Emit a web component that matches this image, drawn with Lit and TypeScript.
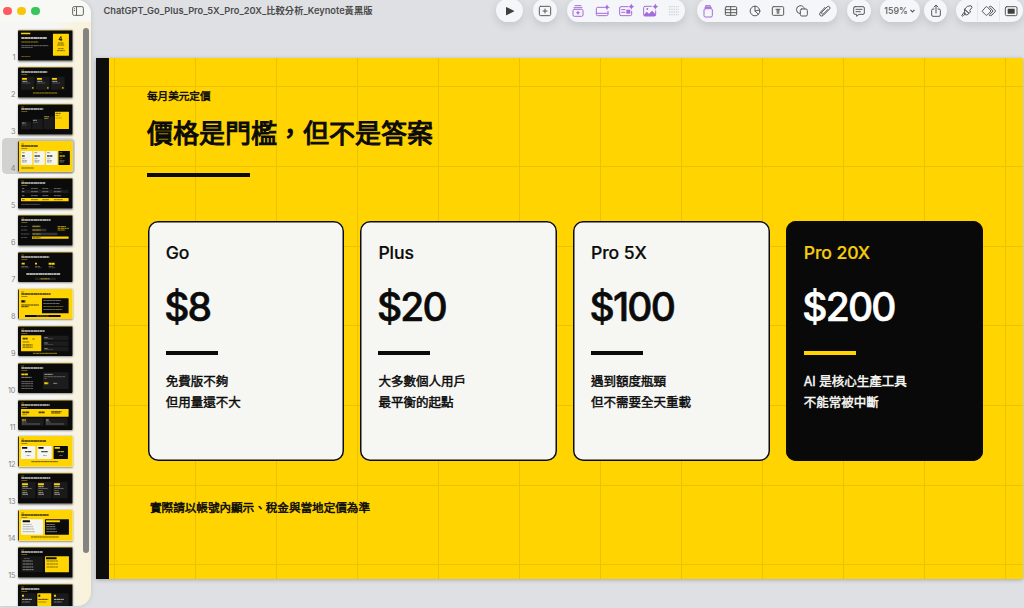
import { LitElement, html, css, svg, SVGTemplateResult } from "lit";
import { customElement, property } from "lit/decorators.js";

const Y = "#ffd400";
const K = "#0b0b0b";
const W = "#f5f5f0";

const box = (x: number, y: number, w: number, h: number, f: string, r = 1) =>
  svg`<rect x=${x} y=${y} width=${w} height=${h} rx=${r} fill=${f}></rect>`;
const line = (x: number, y: number, w: number, c: string, h = 2.4, o = 0.75) =>
  svg`<path d=${`M${x} ${y}h${w}`} stroke=${c} stroke-width=${h} stroke-dasharray="8 .8 11 .6 6 .9" opacity=${o}></path>`;
const head = (c: string, w: number) =>
  svg`${line(10, 9, 9, c === W ? Y : K, 1.6)}${line(10, 15, w, c, 4, 0.8)}${box(10, 21, 18, 1.2, c === W ? Y : K, 0)}`;

interface Thumb { yellow?: boolean; art: SVGTemplateResult; }

const thumbs: Thumb[] = [
  { art: svg`${box(9, 8, 28, 5, Y)}${line(10, 24, 77, W, 5, 0.95)}${line(10, 36, 51, Y, 2.4)}${line(10, 47, 82, W, 2, 0.6)}${line(10, 52, 34, W, 2, 0.6)}${line(10, 80, 28, Y, 1.8)}
      ${box(105, 11, 48, 66, Y)}<path d="M129 19l-6 10h10M129.500 20v13" stroke=${K} stroke-width="2.600" fill="none"></path>${line(120, 39, 17, K, 2.4)}${line(118, 45, 21, K, 2.4)}${line(120, 56, 17, K, 2)}${line(117, 62, 24, K, 2)}` },
  { art: svg`${head(W, 78)}${[0, 1, 2].map((i) => svg`${box(9 + i * 45, 29, 41, 39, "#1b1b1b")}${box(12 + i * 45, 33, 15, 5, Y)}${line(13 + i * 45, 43, 15, W, 2.6)}${line(13 + i * 45, 48, 24, W, 1.6, 0.5)}${box(42 + i * 45, 61, 5, 3.4, Y)}`)}${line(45, 78, 73, Y, 2.6)}` },
  { art: svg`${head(W, 66)}${box(9, 53, 31, 23, "#1b1b1b")}${box(43, 45, 31, 31, "#1b1b1b")}${box(77, 37, 31, 39, "#1b1b1b")}${line(12, 57, 11, W, 2.4)}${line(45, 49, 12, W, 2.4)}${line(79, 38, 14, Y, 2.6)}${line(79, 43, 12, W, 2)}${line(12, 63, 14, W, 1.5, 0.4)}${line(45, 55, 14, W, 1.5, 0.4)}
      ${box(111, 23, 42, 52, Y)}${line(113, 28, 15, K, 2.6)}${line(113, 34, 12, K, 1.8)}${line(113, 42, 18, K, 1.6, 0.5)}` },
  { yellow: true, art: svg`${head(K, 50)}${[0, 1, 2, 3].map((i) => svg`${box(9 + i * 37.6, 30, 34, 42, i === 3 ? K : W, 1.5)}${line(12 + i * 37.6, 35, 9, i === 3 ? Y : K, 2, 0.6)}${line(12 + i * 37.6, 45, i ? 16 : 9, i === 3 ? Y : K, 5, 0.8)}${line(12 + i * 37.6, 53, 10, i === 3 ? Y : K, 1.2, 0.7)}${line(12 + i * 37.6, 59, 15, i === 3 ? W : K, 1.8, 0.6)}${line(12 + i * 37.6, 63, 13, i === 3 ? W : K, 1.8, 0.6)}`)}${line(10, 81, 38, K, 2.2)}` },
  { art: svg`${head(W, 72)}${[31, 41, 53].map((y, r) => svg`${r === 1 ? box(9, 35, 143, 10, "#1c1c1c") : ""}${line(12, y, 7, W, 2, 0.7)}${line(39, y, 21, W, 2, 0.6)}${line(73, y, 18, W, 2, 0.6)}${line(108, y, 22, W, 2, 0.6)}`)}${box(9, 60, 143, 10, Y)}${line(12, 65, 8, K, 2.2)}${line(39, 65, 22, K, 2)}${line(73, 65, 20, K, 2)}${line(108, 65, 26, K, 2)}${line(10, 79, 57, W, 1.8, 0.5)}` },
  { art: svg`${head(W, 88)}${[34, 45, 57, 68].map((y, r) => svg`${line(9, y, r === 2 ? 25 : 19, W, 1.8, 0.5)}${box(42, y - 3.5, [24, 43, 76, 110][r], 7, r === 3 ? Y : "#343434")}${line(44, y, 24, r === 3 ? K : Y, 2.2)}`)}${line(119, 35, 25, Y, 3)}${line(119, 40, 34, Y, 2.6)}${line(119, 45, 23, Y, 2.6)}` },
  { art: svg`${head(W, 84)}${line(11, 35, 10, Y, 5, 1)}${line(51, 35, 6, Y, 5, 1)}${line(92, 35, 18, Y, 6, 1)}${line(10, 43, 20, W, 2, 0.6)}${line(51, 43, 15, W, 2, 0.6)}${line(92, 43, 14, W, 2, 0.6)}${line(10, 47, 24, W, 1.5, 0.4)}${line(51, 47, 20, W, 1.5, 0.4)}${line(92, 47, 20, W, 1.5, 0.4)}${line(25, 66, 102, W, 3.8, 0.9)}${box(51, 77, 63, 7, "#242424")}${line(68, 80.5, 28, Y, 2.4)}` },
  { yellow: true, art: svg`${head(K, 88)}${line(10, 37, 12, K, 7, 1)}${line(10, 48, 53, K, 3)}${line(10, 53, 22, K, 3)}${box(72, 28, 80, 45, K)}${[34, 43, 52, 61].map((y, i) => line(76, y, [53, 49, 60, 57][i], i === 2 ? Y : W, 2, 0.7))}${box(21, 78, 107, 6, K)}${line(55, 81, 38, Y, 1.8)}` },
  { art: svg`${head(W, 70)}${box(9, 28, 61, 48, Y)}${line(14, 38, 15, K, 5)}${line(43, 39, 7, K, 2)}${line(14, 48, 20, K, 2)}${[56, 60, 64].map((y) => line(14, y, 30, K, 2))}${[29, 46, 62].map((y) => svg`${box(76, y, 76, 14, "#1c1c1c")}${line(79, y + 5, 11, W, 2)}${line(79, y + 9, 27, W, 1.5, 0.4)}`)}${line(45, 82, 72, Y, 2.5)}` },
  { art: svg`${head(W, 66)}${line(10, 34, 20, Y, 5, 1)}${line(10, 43, 31, W, 2.2)}${[56, 62, 69, 77].map((y) => line(10, y, 36, W, 2, 0.6))}${box(75, 28, 77, 50, "#1c1c1c")}${line(79, 34, 25, W, 2.4)}${line(79, 41, 63, W, 1.8, 0.5)}${line(79, 46, 7, W, 1.8, 0.5)}${line(79, 61, 12, Y, 6, 1)}${line(106, 61, 12, W, 2.2)}` },
  { art: svg`${head(W, 85)}${box(9, 27, 143, 23, Y)}${line(13, 37, 21, K, 5)}${line(62, 37, 18, K, 5)}${line(100, 35, 31, K, 3)}${line(100, 39, 28, K, 3)}${line(13, 44, 14, K, 1.6)}${box(9, 55, 68, 22, "#1c1c1c")}${box(81, 55, 68, 22, "#1c1c1c")}${line(12, 60, 12, Y, 4)}${line(84, 60, 9, W, 4, 0.5)}${line(12, 66, 13, W, 2, 0.6)}${line(84, 66, 13, W, 2, 0.6)}${line(12, 72, 55, W, 2, 0.5)}${line(84, 72, 55, W, 2, 0.5)}` },
  { yellow: true, art: svg`${head(K, 75)}${[0, 1, 2].map((i) => svg`${box(9 + i * 49, 30, 43, 39, i === 2 ? K : W, 1.5)}${box(12 + i * 49, 33, 16, 5, i === 2 ? Y : K)}${line(21 + i * 49, 47, 19, i === 2 ? Y : K, 3.4)}${line(26 + i * 49, 58, 11, i === 2 ? W : K, 2, 0.6)}`)}${line(40, 77, 80, K, 2.4)}` },
  { art: svg`${head(W, 87)}${[0, 1, 2].map((i) => svg`${box(9 + i * 48, 27, 44, 49, "#1a1a1a")}${box(12 + i * 48, 31, 18, 6, Y)}${line(13 + i * 48, 41, 16, W, 3)}${line(13 + i * 48, 46, 29, W, 2, 0.6)}${line(13 + i * 48, 53, 13, Y, 1.8)}${line(13 + i * 48, 59, 15, W, 2.4)}${line(13 + i * 48, 64, 17, W, 2.4)}`)}` },
  { yellow: true, art: svg`${head(K, 83)}${box(9, 28, 66, 46, W)}${box(81, 28, 72, 46, K)}${box(14, 31, 22, 6, K)}${box(84, 31, 42, 6, Y)}${[43, 50, 57, 65].map((y, i) => svg`${line(14, y, 28 + i * 3, K, 1.8, 0.5)}${line(85, y, 26 + i * 2, W, 2)}`)}${line(39, 81, 84, K, 2.4)}` },
  { art: svg`${head(W, 65)}${box(9, 28, 66, 48, "#171717")}${box(81, 28, 72, 48, Y)}${box(84, 31, 32, 6, K)}${line(18, 34, 17, W, 1.8, 0.5)}${[42, 51, 60, 68].map((y, i) => svg`${line(14, y, 30 + i, W, 2.2, 0.7)}${i < 3 ? line(86, y, 34, K, 2) : ""}`)}` },
  { art: svg`${head(W, 55)}${box(9, 28, 45, 60, "#1a1a1a")}${box(58, 28, 42, 60, Y)}${box(104, 28, 48, 60, "#1a1a1a")}${[12, 61, 108].map((x, i) => svg`${box(x, 32, 6, 6, i === 1 ? K : Y)}${line(x, 46, 30, i === 1 ? K : W, 3)}${line(x, 54, 24, i === 1 ? K : W, 2, 0.6)}`)}` },
];

const icons: Record<string, SVGTemplateResult> = {
  play: svg`<path d="M18 20v21q0 2.500 2.400 1.300l21-10.500q2.300-1.300 0-2.600l-21-10.500q-2.400-1.200-2.400 1.300z" fill="#3f3f3d" stroke="none"></path>`,
  add: svg`<rect x="13" y="16" width="34" height="28" rx="4"></rect><path d="M30 24v12M24 30h12"></path>`,
  animate: svg`<path d="M21 14h18M18 20h24"></path><rect x="15" y="25" width="30" height="21" rx="4"></rect><path d="M30 28q.8 6.500 7 7.500-6.200 1-7 7.500-.8-6.500-7-7.500 6.200-1 7-7.500z" fill="currentColor" stroke="none"></path>`,
  slidefx: svg`<path d="M37 19H17q-4 0-4 4v17q0 4 4 4h27q4 0 4-4V31M13 37h35"></path><path d="M45 9q1 9 10 10-9 1-10 10-1-9-10-10 9-1 10-10z" fill="currentColor" stroke="none"></path>`,
  textfx: svg`<path d="M36 17H15q-4 0-4 4v19q0 4 4 4h28q4 0 4-4V31M17 26h10M17 34h10"></path><rect x="31" y="26" width="12" height="12" fill="currentColor" stroke="none"></rect><path d="M46 7q1 9 10 10-9 1-10 10-1-9-10-10 9-1 10-10z" fill="currentColor" stroke="none"></path>`,
  imagefx: svg`<path d="M34 16H15q-4 0-4 4v21q0 4 4 4h28q4 0 4-4V30"></path><path d="M11 42l9-10 7 6 9-9 11 11v5H12z" fill="currentColor" stroke="none"></path><circle cx="22" cy="24" r="3" fill="currentColor" stroke="none"></circle><path d="M46 7q1 9 10 10-9 1-10 10-1-9-10-10 9-1 10-10z" fill="currentColor" stroke="none"></path>`,
  dots: svg`<path d="M15 17h30M15 25h30M15 33h30M15 41h30" stroke="#d0d1d3" stroke-width="4" stroke-linecap="butt" stroke-dasharray="4 3"></path>`,
  jar: svg`<rect x="18" y="23" width="25" height="25" rx="4"></rect><path d="M21 20h19M24 14h13v4H24z"></path>`,
  table: svg`<rect x="13" y="17" width="34" height="26" rx="3"></rect><path d="M13 26h34M13 35h34M29 17v26"></path>`,
  chart: svg`<circle cx="30" cy="30" r="14.500"></circle><path d="M30 15.500V30l10 10M30 30l13-3"></path>`,
  text: svg`<rect x="13" y="17" width="34" height="26" rx="3"></rect><path d="M24 25h12M30 25v11M26 30h8M27 36h6"></path>`,
  shapes: svg`<path d="M24 38A12 12 0 1 1 37 23"></path><rect x="25" y="24" width="21" height="21" rx="4"></rect>`,
  clip: svg`<path d="M39 25L26 38q-3 3-5.500.5t.5-5.500l15-15q4-4 7.500-.5t-.5 7.500L26 42q-6 6-10.500 1.500T17 33l13-14"></path>`,
  comment: svg`<path d="M18 17h24q4 0 4 4v15q0 4-4 4H30l-7 6v-6h-5q-4 0-4-4V21q0-4 4-4zM21 25h18M21 32h13"></path>`,
  share: svg`<path d="M24 24h-3q-4 0-4 4v14q0 4 4 4h18q4 0 4-4V28q0-4-4-4h-3M30 36V13M24 18l6-6 6 6"></path>`,
  brush: svg`<path d="M32 16l10-2 3 5-7 10 3 4-5 4-13-12 4-5zM23 25l13 12-6 5-8-2 1-5zM22 33l-8 11q2 3 5 0l7-6"></path>`,
  diamonds: svg`<path d="M10 30l10-12q2-2.500 5 0l11 12-11 12q-3 2.500-5 0zM31 17q4-3.500 8 1l11 12-11 12q-4 4-8 1M33 20l9 10-9 10"></path>`,
  present: svg`<rect x="13" y="17" width="35" height="27" rx="4"></rect><rect x="20" y="23" width="21" height="15" rx="1" fill="#3f3f3d" stroke="none"></rect>`,
};

@customElement("tool-icon")
class ToolIcon extends LitElement {
  @property() name = "";
  static styles = css`
    :host { display: flex; justify-content: center; flex: 0 0 auto; }
    svg { width: 20px; height: 20px; fill: none; stroke: currentColor; stroke-width: 3; stroke-linecap: round; stroke-linejoin: round; overflow: visible; }
  `;
  render() {
    return html`<svg viewBox="0 0 60 60">${icons[this.name]}</svg>`;
  }
}

@customElement("slide-navigator")
class SlideNavigator extends LitElement {
  static styles = css`
    :host {
      display: block; box-sizing: border-box; width: 91px; height: 606px; overflow: hidden; position: relative;
      border-radius: 0 14px 14px 0;
      background: linear-gradient(90deg, #f6f6f4 0 55%, #f8f3e0 84%, #f9f2d9);
      box-shadow: 0 0 5px rgba(0, 0, 0, .13);
      font-family: Inter, "Liberation Sans", sans-serif;
    }
    .top { display: flex; align-items: center; height: 22px; padding-left: 3.300px; gap: 5.200px; background: #f8f8f5; }
    .dot { width: 8.800px; height: 8.800px; border-radius: 50%; }
    .red { background: #ff5c60; } .amber { background: #f7c60c; } .green { background: #35c759; }
    .panel { width: 12px; height: 10px; margin-left: 27.200px; fill: none; stroke: #666764; stroke-width: 1; }
    .list { display: flex; flex-direction: column; padding-top: 5px; }
    .row { display: flex; box-sizing: border-box; height: 36.950px; padding: 3.100px 0 0 2px; align-items: flex-start; }
    .cell { display: flex; align-items: flex-end; height: 36px; width: 73px; margin-top: -2.700px; padding-bottom: 0; border-radius: 4.500px; }
    .active { background: #d2d2d0; }
    .num { width: 13.300px; height: 11px; font-size: 7.400px; line-height: 11px; text-align: right; color: #858583; margin-bottom: 0; letter-spacing: -.2px; }
    .thumb { width: 54.600px; height: 30.700px; margin: 0 0 2.600px 2.700px; border-radius: 1.500px; overflow: hidden; box-shadow: 0 .5px 2px rgba(0, 0, 0, .4); flex: none; }
    .thumb svg { display: block; width: 100%; height: 100%; }
    .scroll { position: absolute; left: 83px; top: 28px; width: 6px; height: 525px; border-radius: 3px; background: #838383; }
  `;
  render() {
    return html`
      <div class="top">
        <span class="dot red"></span><span class="dot amber"></span><span class="dot green"></span>
        <svg class="panel" viewBox="0 0 12 10"><rect x=".6" y=".6" width="10.800" height="8.800" rx="1.600"></rect><path d="M4.500.6v8.800M1.900 2.800h1.200M1.900 4.500h1.200"></path></svg>
      </div>
      <div class="list">
        ${thumbs.map((t, i) => html`
          <div class="row"><div class="cell ${i === 3 ? "active" : ""}">
            <span class="num">${i < 15 ? i + 1 : ""}</span>
            <div class="thumb"><svg viewBox="0 0 164 92">
              <rect width="164" height="92" fill=${t.yellow ? Y : K}></rect>
              ${t.yellow ? svg`<rect width="2.500" height="92" fill=${K}></rect>` : svg`<rect width="164" height="2" fill="#b79a0c"></rect>`}
              ${t.art}
            </svg></div>
          </div></div>`)}
      </div>
      <div class="scroll"></div>
    `;
  }
}

@customElement("price-card")
class PriceCard extends LitElement {
  @property() plan = "";
  @property() price = "";
  @property({ type: Array }) note: string[] = [];
  static styles = css`
    :host {
      display: block; box-sizing: border-box; height: 240px; padding: 20px 0 0 18px;
      box-shadow: inset 0 0 0 1.500px #0c0c0c; border-radius: 10px; background: #f6f7f2; color: #0b0b0b;
      font-family: Inter, "Noto Sans CJK TC", sans-serif;
    }
    :host([dark]) { background: #090909; color: #f6f7f2; }
    .plan { font-size: 17.600px; line-height: 24px; font-weight: 500; letter-spacing: -.1px; -webkit-text-stroke: .2px currentColor; }
    .price { font-size: 39px; line-height: 46px; font-weight: 500; letter-spacing: -1.800px; margin: 19px 0 0 -1.500px; -webkit-text-stroke: .6px currentColor; }
    :host([dark]) .price { color: #fff; }
    .rule { width: 52px; height: 4px; margin-top: 21px; background: #0b0b0b; }
    .note { margin-top: 16px; font: 400 12.500px/21px Inter, "Noto Sans CJK TC", sans-serif; -webkit-text-stroke: .45px currentColor; }
    .note div { height: 21px; white-space: nowrap; }
    :host([dark]) .plan { color: #f5cd0a; }
    :host([dark]) .rule { background: #ffd400; }
  `;
  render() {
    return html`
      <div class="plan">${this.plan}</div>
      <div class="price">${this.price}</div>
      <div class="rule"></div>
      <div class="note">${this.note.map((n) => html`<div>${n}</div>`)}</div>
    `;
  }
}

@customElement("app-root")
class AppRoot extends LitElement {
  static styles = css`
    :host {
      display: grid; grid-template-columns: 91px 1fr; width: 1024px; height: 608px; overflow: hidden;
      background: #dfe0e4; color: #0b0b0b;
      font-family: "Noto Sans CJK TC", sans-serif;
    }
    .main { display: flex; flex-direction: column; min-width: 0; }
    .bar { display: flex; align-items: center; height: 23px; margin-top: -1px; margin-bottom: 36px; flex: none; }
    .title { width: 392.500px; padding-left: 12.500px; font: 600 9.280px/22px Inter, "Noto Sans CJK TC", sans-serif; color: #4b4b4a; white-space: nowrap; }
    .pill { display: flex; box-sizing: border-box; justify-content: center; align-items: center; height: 23px; border-radius: 12px; background: #f5f6f9; color: #595957; box-shadow: 0 3px 8px rgba(50, 50, 60, .16); flex: none; }
    .magic, .jar { color: #a66bdb; }
    .magic tool-icon { width: 24.200px; }
    .insert tool-icon { width: 23.500px; }
    .inspect tool-icon { width: 21.700px; }
    .inspect tool-icon + tool-icon { box-shadow: -1px 0 #e6e7ea; }
    .zoom { font: 500 8.800px/22px Inter, sans-serif; gap: 2px; }
    .chev { width: 5px; height: 4px; fill: none; stroke: currentColor; stroke-width: 1.200; }
    .play { width: 27px; margin-right: 9.500px; }
    .add { width: 24.500px; margin-right: 10px; }
    .magic { width: 118px; margin-right: 11.500px; }
    .insert { width: 140px; margin-right: 10.500px; }
    .comment { width: 24px; margin-right: 8.500px; }
    .zoom { width: 40px; margin-right: 4.500px; }
    .share { width: 23px; margin-right: 8.500px; }
    .inspect { width: 67px; }
    .slide {
      box-sizing: border-box; width: 927px; height: 521px; margin-left: 5px; padding: 30px 39px 0 38px;
      border-left: 13px solid #0c0c0a;
      background:
        repeating-linear-gradient(90deg, transparent 0 5px, #e9c303 5px 6px, transparent 6px 81px),
        repeating-linear-gradient(180deg, transparent 0 28.200px, #e9c303 28.200px 29.200px, transparent 29.200px 79.700px),
        #ffd400;
      box-shadow: 0 1px 4px rgba(0, 0, 0, .25);
    }
    .eyebrow { font-size: 10.600px; line-height: 16px; -webkit-text-stroke: .45px currentColor; }
    h1 { margin: 9px 0 0; font-size: 26px; line-height: 38px; font-weight: 400; white-space: nowrap; -webkit-text-stroke: 1.050px currentColor; }
    .rule { width: 103px; height: 4px; margin-top: 22px; background: #0b0b0b; }
    .cards { display: grid; grid-template-columns: repeat(4, 196.800px); gap: 15.900px; margin: 44px 0 0 .7px; }
    .foot { margin: 37.500px 0 0 3px; font-size: 11.580px; line-height: 17px; -webkit-text-stroke: .5px currentColor; }
  `;
  render() {
    const set = (names: string) => names.split(" ").map((n) => html`<tool-icon name=${n} class=${n === "jar" ? "jar" : ""}></tool-icon>`);
    return html`
      <slide-navigator></slide-navigator>
      <div class="main">
        <div class="bar">
          <div class="title">ChatGPT_Go_Plus_Pro_5X_Pro_20X_比較分析_Keynote黃黑版</div>
          <div class="pill play">${set("play")}</div>
          <div class="pill add">${set("add")}</div>
          <div class="pill magic">${set("animate slidefx textfx imagefx dots")}</div>
          <div class="pill insert">${set("jar table chart text shapes clip")}</div>
          <div class="pill comment">${set("comment")}</div>
          <div class="pill zoom">159%<svg class="chev" viewBox="0 0 5 4"><path d="M.5.8l2 2 2-2"></path></svg></div>
          <div class="pill share">${set("share")}</div>
          <div class="pill inspect">${set("brush diamonds present")}</div>
        </div>
        <div class="slide">
          <div class="eyebrow">每月美元定價</div>
          <h1 lang="zh-Hant">價格是門檻，但不是答案</h1>
          <div class="rule"></div>
          <div class="cards">
            <price-card plan="Go" price="$8" .note=${["免費版不夠", "但用量還不大"]}></price-card>
            <price-card plan="Plus" price="$20" .note=${["大多數個人用戶", "最平衡的起點"]}></price-card>
            <price-card plan="Pro 5X" price="$100" .note=${["遇到額度瓶頸", "但不需要全天重載"]}></price-card>
            <price-card dark plan="Pro 20X" price="$200" .note=${["AI 是核心生產工具", "不能常被中斷"]}></price-card>
          </div>
          <div class="foot">實際請以帳號內顯示、稅金與當地定價為準</div>
        </div>
      </div>
    `;
  }
}
